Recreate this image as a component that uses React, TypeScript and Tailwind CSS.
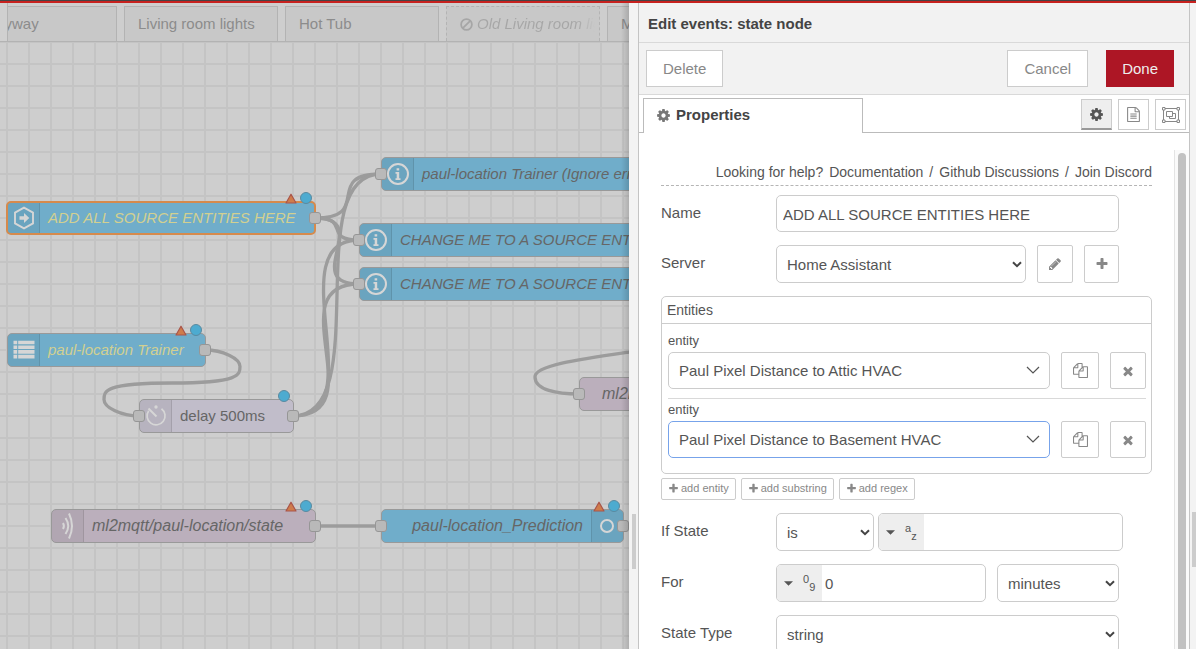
import type { ReactNode } from "react";

const glyphs = {
  cog: "M1152 896q0-106-75-181t-181-75-181 75-75 181 75 181 181 75 181-75 75-181zm512-109v222q0 12-8 23t-20 13l-185 28q-19 54-39 91 35 50 107 138 10 12 10 25t-9 23q-27 37-99 108t-94 71q-12 0-26-9l-138-108q-44 23-91 38-16 136-29 186-7 28-36 28h-222q-14 0-24.5-8.5t-11.5-21.5l-28-184q-49-16-90-37l-141 107q-10 9-25 9-14 0-25-11-126-114-165-168-7-10-7-23 0-12 8-23 15-21 51-66.5t54-70.5q-27-50-41-99l-183-27q-13-2-21-12.5t-8-23.5v-222q0-12 8-23t19-13l186-28q14-46 39-92-40-57-107-138-10-12-10-24 0-10 9-23 26-36 98.5-107.5t94.5-71.5q13 0 26 10l138 107q44-23 91-38 16-136 29-186 7-28 36-28h222q14 0 24.5 8.5t11.5 21.5l28 184q49 16 90 37l142-107q9-9 24-9 13 0 25 10 129 119 165 170 7 8 7 22 0 12-8 23-15 21-51 66.5t-54 70.5q26 50 41 98l183 28q13 2 21 12.5t8 23.5z",
  files: "M1696 384q40 0 68 28t28 68v1216q0 40-28 68t-68 28h-960q-40 0-68-28t-28-68v-288h-544q-40 0-68-28t-28-68v-672q0-40 20-88t48-76l408-408q28-28 76-48t88-20h416q40 0 68 28t28 68v328q68-40 128-40h416zm-544 213l-299 299h299v-299zm-640-384l-299 299h299v-299zm196 647l316-316v-416h-384v416q0 40-28 68t-68 28h-416v640h512v-256q0-40 20-88t48-76zm956 804v-1152h-384v416q0 40-28 68t-68 28h-416v640h896z",
  fileText: "M1596 380q28 28 48 76t20 88v1152q0 40-28 68t-68 28h-1344q-40 0-68-28t-28-68v-1600q0-40 28-68t68-28h896q40 0 88 20t76 48zm-444-244v376h376q-10-29-22-41l-313-313q-12-12-41-22zm384 1528v-1024h-416q-40 0-68-28t-28-68v-416h-768v1536h1280zm-1024-864q0-14 9-23t23-9h704q14 0 23 9t9 23v64q0 14-9 23t-23 9h-704q-14 0-23-9t-9-23v-64zm736 224q14 0 23 9t9 23v64q0 14-9 23t-23 9h-704q-14 0-23-9t-9-23v-64q0-14 9-23t23-9h704zm0 256q14 0 23 9t9 23v64q0 14-9 23t-23 9h-704q-14 0-23-9t-9-23v-64q0-14 9-23t23-9h704z",
  plus: "M1600 736v192q0 40-28 68t-68 28h-416v416q0 40-28 68t-68 28h-192q-40 0-68-28t-28-68v-416h-416q-40 0-68-28t-28-68v-192q0-40 28-68t68-28h416v-416q0-40 28-68t68-28h192q40 0 68 28t28 68v416h416q40 0 68 28t28 68z",
  times: "M1490 1322q0 40-28 68l-136 136q-28 28-68 28t-68-28l-294-294-294 294q-28 28-68 28t-68-28l-136-136q-28-28-28-68t28-68l294-294-294-294q-28-28-28-68t28-68l136-136q28-28 68-28t68 28l294 294 294-294q28-28 68-28t68 28l136 136q28 28 28 68t-28 68l-294 294 294 294q28 28 28 68z",
  pencil: "M491 1536l91-91-235-235-91 91v107h128v128h107zm523-928q0-22-22-22-10 0-17 7l-542 542q-7 7-7 17 0 22 22 22 10 0 17-7l542-542q7-7 7-17zm-54-192l416 416-832 832h-416v-416zm683 96q0 53-37 90l-166 166-416-416 166-165q36-38 90-38 53 0 91 38l235 234q37 39 37 91z",
};

function Glyph({ name, className }: { name: keyof typeof glyphs; className: string }) {
  return (
    <svg viewBox="0 0 1792 1792" className={`shrink-0 fill-current ${className}`} aria-hidden="true">
      <path d={glyphs[name]} />
    </svg>
  );
}

function GroupIcon() {
  return (
    <svg viewBox="0 0 18 16" className="h-4 w-[18px] shrink-0" fill="none" stroke="currentColor" aria-hidden="true">
      <path d="M3 1.500h12M3 14.500h12M1.500 3v10M16.500 3v10" />
      <path d="M.5.5h2.500v2.500H.5zM15 .5h2.500v2.500H15zM.5 13h2.500v2.500H.5zM15 13h2.500v2.500H15z" />
      <path d="M4.500 4.500h6v5h-6z" />
      <path d="M10.500 6.500h3v5h-6v-2" />
    </svg>
  );
}

/* ---------- Flow canvas ---------- */

type IconKind = "arrow" | "info" | "list" | "timer" | "signal" | "ring";

function NodeIcon({ kind }: { kind: IconKind }) {
  const common = { fill: "none", stroke: "#d6d6d6", "aria-hidden": true } as const;
  switch (kind) {
    case "arrow":
      return (
        <svg viewBox="0 0 24 24" className="size-6" {...common}>
          <path d="M12 1.700L21 6.600v10.800L12 22.300 3 17.400V6.600z" strokeWidth="1.900" />
          <path d="M7.500 10.200h4.500V7l5.300 5-5.300 5v-3.200H7.500z" fill="#d6d6d6" stroke="none" />
        </svg>
      );
    case "info":
      return (
        <svg viewBox="0 0 24 24" className="size-6" {...common}>
          <circle cx="12" cy="12" r="10" strokeWidth="2" />
          <path d="M10.600 6.200h2.600v2.400h-2.600zM9.500 10h3.700v6.200h1.300v1.700H9.500v-1.700h1.200v-4.500H9.500z" fill="#d6d6d6" stroke="none" />
        </svg>
      );
    case "list":
      return (
        <svg viewBox="0 0 24 24" className="size-6" {...common}>
          <path d="M1.500 4.500h21M1.500 9.200h21M1.500 13.900h21M1.500 18.600h21" strokeWidth="3.600" />
          <path d="M5.700 2v19" stroke="#6ca5c1" strokeWidth="1" />
        </svg>
      );
    case "timer":
      return (
        <svg viewBox="0 0 24 24" className="size-6" {...common}>
          <path d="M17.500 4.700A9 9 0 1 1 4.700 6.700" strokeWidth="1.700" />
          <path d="M4.500 4.500l8 8" strokeWidth="2" />
          <circle cx="12" cy="3" r="1.700" fill="#d6d6d6" stroke="none" />
        </svg>
      );
    case "signal":
      return (
        <svg viewBox="0 0 24 34" className="h-[34px] w-6" {...common}>
          <path d="M7 14q1.800 3 0 6" strokeWidth="2" />
          <path d="M9.500 9q5.500 8 0 16" strokeWidth="2" />
          <path d="M13 4.500q6 12.500 0 25" strokeWidth="2" />
        </svg>
      );
    case "ring":
      return (
        <svg viewBox="0 0 24 24" className="size-6" {...common}>
          <circle cx="11" cy="12" r="6" strokeWidth="2" />
        </svg>
      );
  }
}

type FlowNode = {
  id: string;
  label: string;
  box: string;
  fill: string;
  text: string;
  icon?: IconKind;
  iconRight?: boolean;
  selected?: boolean;
  input?: boolean;
  output?: boolean;
  error?: boolean;
  changed?: boolean;
};

const nodes: FlowNode[] = [
  { id: "source", label: "ADD ALL SOURCE ENTITIES HERE", box: "left-[6px] top-[159px] w-[310px]", fill: "bg-[#70adca]", text: "text-[15px] italic text-[#d2d091]", icon: "arrow", selected: true, output: true, error: true, changed: true },
  { id: "ignore", label: "paul-location Trainer (Ignore errors)", box: "left-[381px] top-[115px] w-[310px]", fill: "bg-[#70adca]", text: "text-[15px] italic text-[#666]", icon: "info", input: true },
  { id: "change1", label: "CHANGE ME TO A SOURCE ENTITY", box: "left-[359px] top-[181px] w-[330px]", fill: "bg-[#70adca]", text: "text-[15px] italic text-[#666]", icon: "info", input: true },
  { id: "change2", label: "CHANGE ME TO A SOURCE ENTITY", box: "left-[359px] top-[225px] w-[330px]", fill: "bg-[#70adca]", text: "text-[15px] italic text-[#666]", icon: "info", input: true },
  { id: "trainer", label: "paul-location Trainer", box: "left-[7px] top-[291px] w-[199px]", fill: "bg-[#70adca]", text: "text-[15px] italic text-[#d2d091]", icon: "list", output: true, error: true, changed: true },
  { id: "delay", label: "delay 500ms", box: "left-[139px] top-[357px] w-[155px]", fill: "bg-[#c1bdca]", text: "text-[15px] text-[#666]", icon: "timer", input: true, output: true, changed: true },
  { id: "mqttout", label: "ml2mqtt/paul-location", box: "left-[579px] top-[335px] w-[220px]", fill: "bg-[#bbafbc]", text: "ml-[14px] text-base italic text-[#666]", input: true },
  { id: "mqttin", label: "ml2mqtt/paul-location/state", box: "left-[51px] top-[467px] w-[265px]", fill: "bg-[#bbafbc]", text: "text-base italic text-[#666]", icon: "signal", output: true, error: true, changed: true },
  { id: "prediction", label: "paul-location_Prediction", box: "left-[381px] top-[467px] w-[243px]", fill: "bg-[#70adca]", text: "text-right text-base italic text-[#666]", icon: "ring", iconRight: true, input: true, output: true, error: true, changed: true },
];

const wires = [
  "M315 176C374 176 322 132 381 132",
  "M315 176C352 176 322 198 359 198",
  "M315 176C374 176 300 242 359 242",
  "M293 374C375.500 374 298.500 132 381 132",
  "M293 374C375.500 374 276.500 198 359 198",
  "M293 374C375.500 374 276.500 242 359 242",
  "M205 308C222.500 308 240 316.250 240 324.500S240 341 172 341 104 349.250 104 357.500 121.500 374 139 374",
  "M315 484H381",
  "M650 307C590 316 535 322 535 335S557 352 579 352",
];

function Port({ side }: { side: string }) {
  return <span className={`absolute top-[11px] size-3 rounded-[3px] border border-[#969696] bg-[#b9b9b9] ${side}`} />;
}

function NodeCard({ node }: { node: FlowNode }) {
  const iconBox = node.icon && (
    <span className={`flex w-8 shrink-0 items-center justify-center bg-black/5 ${node.iconRight ? "border-l" : "border-r"} border-black/10`}>
      <NodeIcon kind={node.icon} />
    </span>
  );
  return (
    <div className={`absolute h-[34px] ${node.box}`}>
      <div
        className={`flex h-full overflow-hidden rounded-[5px] ${node.fill} ${
          node.selected ? "border-2 border-[#d68a4c]" : "border border-[#999]"
        }`}
      >
        {!node.iconRight && iconBox}
        <span className={`flex-1 self-center whitespace-nowrap px-2 leading-5 ${node.text}`}>{node.label}</span>
        {node.iconRight && iconBox}
      </div>
      {node.input && <Port side="-left-[6px]" />}
      {node.output && <Port side="-right-[5px]" />}
      {node.error && (
        <svg viewBox="0 0 12 11" className="absolute -top-[8px] right-[19px] h-[11px] w-3" aria-hidden="true">
          <path d="M6 1.200L11 10H1z" fill="#cf7c4b" stroke="#a9554a" strokeWidth="1.200" strokeLinejoin="round" />
        </svg>
      )}
      {node.changed && <span className="absolute -top-[9px] right-1 size-3 rounded-full border border-[#5a8aa0] bg-[#4dabd0]" />}
    </div>
  );
}

function Workspace() {
  const tab = "flex h-[35px] w-[154px] shrink-0 items-center overflow-hidden whitespace-nowrap border border-b-0 bg-[#c8c8c8] px-[13px]";
  return (
    <main className="relative flex min-w-0 flex-1 flex-col overflow-hidden bg-[#cecece]">
      <nav className="relative flex h-[39px] shrink-0 items-end gap-[7px] overflow-hidden border-b border-[#b3b3b3] text-[15px] text-[#8c8c8c]">
        <a href="#entryway" className={`${tab} -ml-[37px] border-[#b3b3b3]`}>
          <span>Entryway</span>
        </a>
        <a href="#living" className={`${tab} border-[#b3b3b3]`}>Living room lights</a>
        <a href="#hottub" className={`${tab} border-[#b3b3b3]`}>Hot Tub</a>
        <a href="#old" className={`${tab} gap-1 border-dashed border-[#b3b3b3] pr-1 italic`}>
          <svg viewBox="0 0 14 14" className="size-[13px] shrink-0" fill="none" stroke="#a6a6a6" strokeWidth="1.900" aria-hidden="true">
            <circle cx="7" cy="7" r="5.800" />
            <path d="M3 11l8-8" />
          </svg>
          <span className="overflow-hidden bg-gradient-to-r from-[#a6a6a6] from-85% to-[#c8c8c8] bg-clip-text text-transparent">Old Living room lights</span>
        </a>
        <a href="#misc" className={`${tab} border-[#b3b3b3]`}>Misc</a>
        <button aria-label="Scroll tabs left" className="absolute inset-y-0 left-0 w-2 border-r border-[#b3b3b3] bg-[#d0d0d0]" />
      </nav>
      <div className="relative flex-1 overflow-hidden bg-[linear-gradient(to_right,#c4c4c4_2px,transparent_2px),linear-gradient(to_bottom,#c4c4c4_2px,transparent_2px)] bg-[size:22px_22px] bg-[position:6px_21px]">
        <svg className="absolute inset-0 size-full" fill="none" stroke="#9c9c9c" strokeWidth="3.300" aria-hidden="true">
          {wires.map((d) => (
            <path key={d} d={d} />
          ))}
        </svg>
        {nodes.map((node) => (
          <NodeCard key={node.id} node={node} />
        ))}
      </div>
      <div className="pointer-events-none absolute inset-y-0 right-0 w-2 bg-gradient-to-r from-transparent to-black/15" />
    </main>
  );
}

/* ---------- Form controls ---------- */

const field = "rounded-[5px] border bg-white text-[15px] text-[#555]";

function Select({ id, label, value, className, thin, focused }: { id: string; label?: string; value: string; className: string; thin?: boolean; focused?: boolean }) {
  return (
    <div className={`relative ${className}`}>
      <select id={id} aria-label={label} className={`h-full w-full appearance-none pl-[10px] pt-[2px] outline-none ${field} ${focused ? "border-[#77a3ea]" : "border-[#ccc]"}`}>
        <option>{value}</option>
      </select>
      {thin ? (
        <svg viewBox="0 0 14 8" className="pointer-events-none absolute right-[10px] top-[14px] h-2 w-[14px]" fill="none" stroke="#555" strokeWidth="1.200" aria-hidden="true">
          <path d="M1 1l6 6 6-6" />
        </svg>
      ) : (
        <svg viewBox="0 0 10 7" className="pointer-events-none absolute right-1 top-4 h-[7px] w-[10px]" fill="none" stroke="#444" strokeWidth="2" aria-hidden="true">
          <path d="M1 1.200l4 4 4-4" />
        </svg>
      )}
    </div>
  );
}

function IconButton({ label, className, children }: { label: string; className: string; children: ReactNode }) {
  return (
    <button type="button" aria-label={label} className={`flex shrink-0 items-center justify-center rounded-[2px] border border-[#ccc] bg-white text-[#888] ${className}`}>
      {children}
    </button>
  );
}

function TypedInput({ id, label, value, high, low, className }: { id: string; label?: string; value: string; high: string; low: string; className: string }) {
  return (
    <div className={`flex h-[38px] overflow-hidden border-[#ccc] ${field} ${className}`}>
      <button type="button" aria-label="Value type" className="flex w-[45px] shrink-0 items-center gap-[10px] bg-[#eee] pl-[7px]">
        <svg viewBox="0 0 10 5" className="h-[5px] w-[9px]" fill="#555" aria-hidden="true">
          <path d="M0 0h10L5 5z" />
        </svg>
        <span className="flex h-5 text-[11px] leading-3">
          <span>{high}</span>
          <span className="self-end">{low}</span>
        </span>
      </button>
      <input id={id} aria-label={label} defaultValue={value} className="min-w-0 flex-1 px-[3px] pt-[2px] outline-none" />
    </div>
  );
}

function Row({ label, htmlFor, children }: { label: string; htmlFor: string; children: ReactNode }) {
  return (
    <div className="mt-[13px] flex">
      <label htmlFor={htmlFor} className="w-[115px] shrink-0 pt-2 text-[15px] leading-5">{label}</label>
      {children}
    </div>
  );
}

function EntityRow({ id, value, focused }: { id: string; value: string; focused?: boolean }) {
  return (
    <div className="pt-[3px]">
      <label htmlFor={id} className="block text-[13px] leading-4">entity</label>
      <div className="mt-[3px] flex h-[37px] gap-[11px]">
        <Select id={id} value={value} className="min-w-0 flex-1" thin focused={focused} />
        <IconButton label="Copy" className="w-[38px]"><Glyph name="files" className="size-[15px]" /></IconButton>
        <IconButton label="Remove" className="w-9"><Glyph name="times" className="size-[14px]" /></IconButton>
      </div>
    </div>
  );
}

function Tray() {
  const toolbarButton = "h-[37px] border border-[#ccc] bg-white px-4 pt-[2px] text-[15px] text-[#888]";
  const viewButton = "flex h-[31px] w-[31px] items-center justify-center border border-[#ccc]";
  return (
    <aside className="flex w-[552px] shrink-0 flex-col border-x border-[#c4c4c4] bg-white text-[#555]">
      <h1 className="flex h-10 shrink-0 items-center border-b border-[#d9d9d9] bg-[#f2f2f2] px-[9px] pt-[3px] text-[15px] font-bold text-[#444]">Edit events: state node</h1>
      <div className="flex h-[52px] shrink-0 items-center border-b border-[#d9d9d9] bg-[#f2f2f2] pl-[7px] pr-[15px]">
        <button className={toolbarButton}>Delete</button>
        <button className={`${toolbarButton} ml-auto`}>Cancel</button>
        <button className="ml-[18px] h-[37px] bg-[#ad1625] px-4 pt-[2px] text-[15px] text-[#eee]">Done</button>
      </div>
      <div className="flex h-[38px] shrink-0">
        <div className="w-1 border-b border-[#bbb]" />
        <button className="mt-[3px] flex w-[220px] items-center gap-[5px] border border-b-0 border-[#bbb] bg-white pb-[2px] pl-3 text-[15px] font-bold text-[#444]">
          <Glyph name="cog" className="size-[15px] text-[#777]" />
          Properties
        </button>
        <div className="flex flex-1 justify-end gap-[6px] border-b border-[#bbb] pr-[3px] pt-1">
          <button aria-label="Properties" className={`${viewButton} border-b-2 border-b-[#999] bg-[#eee] text-[#555]`}><Glyph name="cog" className="size-[15px]" /></button>
          <button aria-label="Description" className={`${viewButton} text-[#888]`}><Glyph name="fileText" className="size-[15px]" /></button>
          <button aria-label="Appearance" className={`${viewButton} text-[#888]`}><GroupIcon /></button>
        </div>
      </div>
      <div className="flex min-h-0 flex-1 pt-[17px]">
        <form className="min-w-0 flex-1 overflow-hidden px-[22px]">
          <div className="flex h-9 items-center justify-end gap-[6px] whitespace-nowrap border-b border-dashed border-[#b5b5b5] pt-2 text-[14px] leading-5">
            <span>Looking for help?</span>
            <a href="#docs">Documentation</a>
            <span>/</span>
            <a href="#discussions">Github Discussions</a>
            <span>/</span>
            <a href="#discord">Join Discord</a>
          </div>
          <div className="-mt-1">
            <Row label="Name" htmlFor="name">
              <input id="name" defaultValue="ADD ALL SOURCE ENTITIES HERE" className={`h-[37px] w-[343px] border-[#ccc] px-[6px] pt-[2px] outline-none ${field}`} />
            </Row>
          </div>
          <Row label="Server" htmlFor="server">
            <Select id="server" value="Home Assistant" className="h-[38px] w-[250px]" />
            <IconButton label="Edit server" className="ml-[11px] w-9"><Glyph name="pencil" className="size-[14px]" /></IconButton>
            <IconButton label="Add server" className="ml-[11px] w-[35px]"><Glyph name="plus" className="size-[14px]" /></IconButton>
          </Row>
          <section className="mt-[13px] h-[178px] rounded-[5px] border border-[#ccc]">
            <h2 className="h-[27px] border-b border-[#ccc] px-[5px] text-[14px] leading-[27px]">Entities</h2>
            <div className="px-[6px] pr-[5px] pt-[6px]">
              <EntityRow id="entity1" value="Paul Pixel Distance to Attic HVAC" />
              <div className="mt-[9px] border-t border-[#d9d9d9]">
                <EntityRow id="entity2" value="Paul Pixel Distance to Basement HVAC" focused />
              </div>
            </div>
          </section>
          <div className="mt-1 flex gap-[5px]">
            {["add entity", "add substring", "add regex"].map((text) => (
              <button key={text} type="button" className="flex h-[22px] items-center gap-[2px] rounded-[2px] border border-[#ccc] px-[6px] pb-px text-[11px] text-[#888]">
                <Glyph name="plus" className="size-[11px]" />
                {text}
              </button>
            ))}
          </div>
          <Row label="If State" htmlFor="ifstate">
            <Select id="ifstate" value="is" className="h-[38px] w-[98px]" />
            <TypedInput id="ifvalue" label="State value" value="" high="a" low="z" className="ml-1 w-[245px]" />
          </Row>
          <Row label="For" htmlFor="for">
            <TypedInput id="for" value="0" high="0" low="9" className="w-[210px]" />
            <Select id="units" label="Units" value="minutes" className="ml-[11px] h-[38px] w-[122px]" />
          </Row>
          <Row label="State Type" htmlFor="statetype">
            <Select id="statetype" value="string" className="h-[38px] w-[343px]" />
          </Row>
        </form>
        <div className="w-[15px] shrink-0 border-l border-[#e4e4e4] bg-[#fafafa] pl-[3px] pt-[3px]">
          <div className="h-full w-2 rounded-t-full bg-[#c1c1c1]" />
        </div>
      </div>
    </aside>
  );
}

export default function App() {
  return (
    <div className="flex h-screen flex-col overflow-hidden font-['Liberation_Sans',Arial,sans-serif]">
      <header className="h-[3px] shrink-0 border-b-2 border-[#c7211e] bg-[#444]" />
      <div className="flex min-h-0 flex-1">
        <Workspace />
        <div className="flex w-[9px] shrink-0 flex-col items-center justify-end bg-[#f3f3f3] pb-20">
          <div className="h-[55px] w-1 bg-[#ccc]" />
        </div>
        <Tray />
        <div className="flex w-[6px] shrink-0 flex-col items-end justify-end bg-[#f3f3f3] pb-[82px]">
          <div className="h-[55px] w-1 bg-[#ccc]" />
        </div>
      </div>
    </div>
  );
}
